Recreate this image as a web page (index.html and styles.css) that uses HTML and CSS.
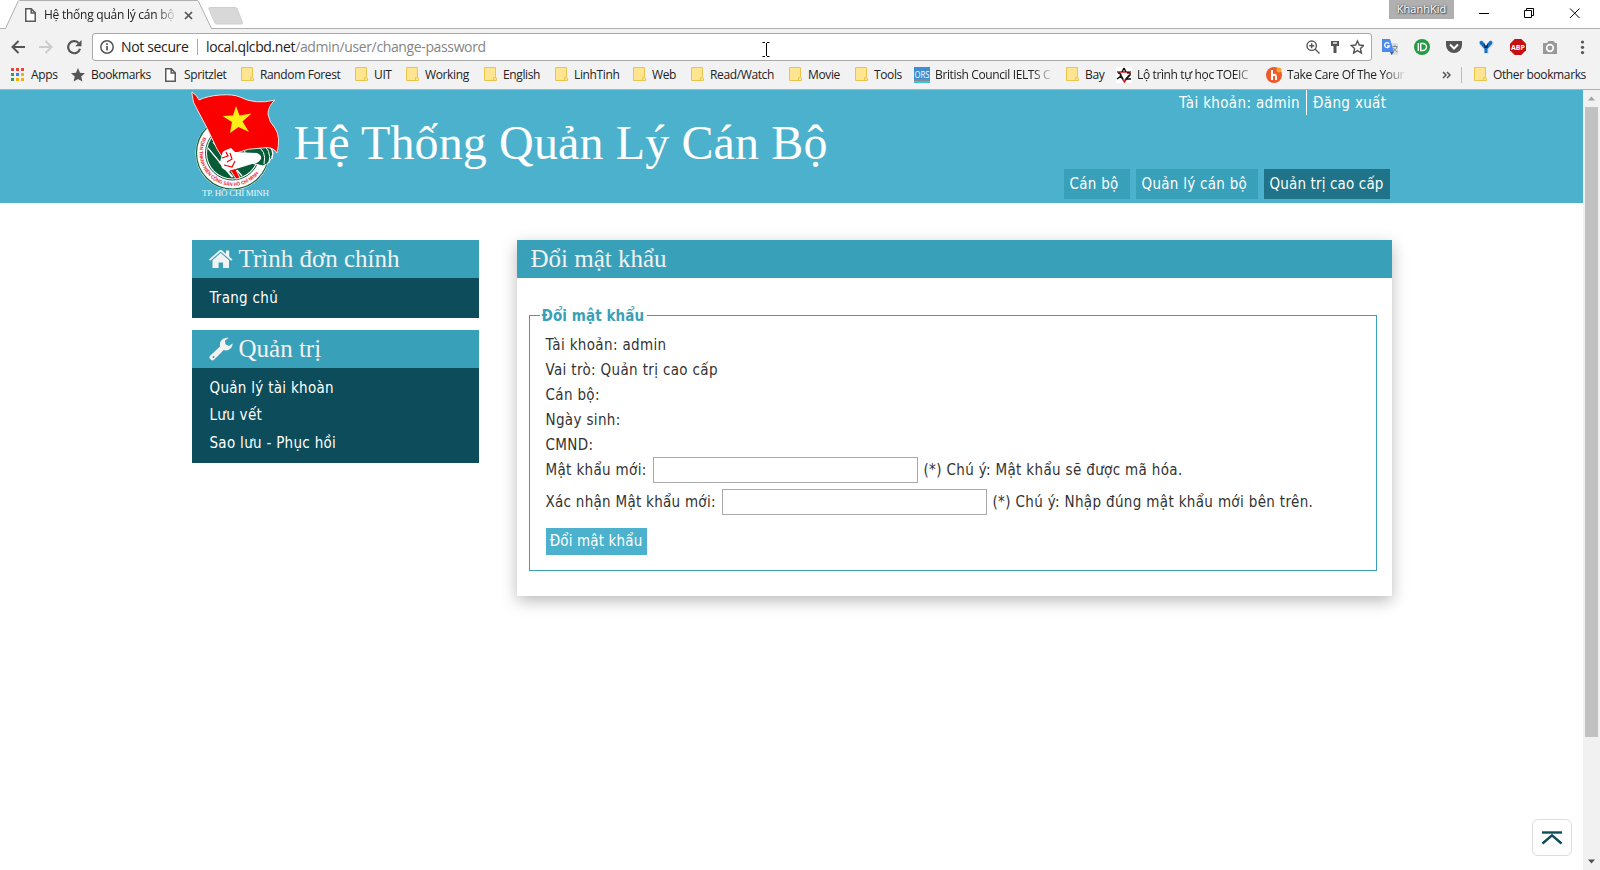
FILE: index.html
```html
<!DOCTYPE html>
<html lang="vi">
<head>
<meta charset="utf-8">
<title>Hệ thống quản lý cán bộ</title>
<link rel="stylesheet" href="styles.css">
</head>
<body>
<svg class="defs" width="0" height="0">
  <symbol id="page" viewBox="0 0 11 14"><path d="M.75.75h5.5l4 4v8.5H.75zM6.2.9v4h4" fill="#fff" stroke="#5a5a5a" stroke-width="1.5"/></symbol>
  <symbol id="folder" viewBox="0 0 13 15"><path d="M.5.5h11v9.8l1 .8v2.4h-12z" fill="#ffe58f" stroke="#e9c64b"/><path d="M9.500 14v-3.500h2" fill="none" stroke="#e9c64b"/></symbol>
</svg>
<div class="chrome">
  <div class="tabstrip">
    <svg class="tabshape" width="250" height="29" viewBox="0 0 250 29"><path d="M0 28.500H5L18 1.500q.5-1 1.500-1H197q1 0 1.500 1L211 28.500V29H0z" fill="#f2f2f2"/><path d="M0 28.500H5.500L18 1.500q.5-1 1.500-1H197q1 0 1.500 1L211.500 28.500H250" fill="none" stroke="#b0b0b0"/><path d="M209.500 7.500h26q1 0 1.500 1l5.500 14q.3 1.500-1 1.500h-25q-1 0-1.500-1l-6-14q-.5-1.500.5-1.500z" fill="#d8d8d8" stroke="#cfcfcf"/></svg>
    <div class="tab"><svg width="11" height="14"><use href="#page"/></svg><span class="tabtitle">Hệ thống quản lý cán bộ</span><svg width="9" height="9" viewBox="0 0 9 9"><path d="M1 1l7 7M8 1L1 8" stroke="#555" stroke-width="1.700"/></svg></div>
    <div class="profile">KhanhKid</div>
    <svg class="winbtns" width="98" height="12" viewBox="0 0 98 12" fill="none" stroke="#000"><path d="M0 6.500h10M45.500 3.500h7v7h-7zM47.500 3V1.500h7v7H53M91 1.500l9.500 9.500M100.500 1.500L91 11"/></svg>
  </div>
  <div class="toolbar">
    <svg class="nav" width="72" height="16" viewBox="0 0 72 16" fill="none" stroke-width="2"><path d="M15 8H2.500M8.500 2L2.500 8l6 6" stroke="#555"/><path d="M29 8h12.500M35.500 2l6 6-6 6" stroke="#ccc"/><path d="M68.500 4A6 6 0 1 0 70 9.800" stroke="#555" stroke-width="2.200"/><path d="M71.500 1v6.300h-6.300z" fill="#555"/></svg>
    <div class="omnibox">
      <svg width="14" height="14" viewBox="0 0 14 14"><circle cx="7" cy="7" r="6.200" fill="none" stroke="#555" stroke-width="1.500"/><path d="M7 6v4.500M7 3.300v1.700" stroke="#555" stroke-width="1.700"/></svg>
      <span class="secure">Not secure</span><i class="bar"></i><span class="url">local.qlcbd.net<em>/admin/user/change-password</em></span>
      <svg class="omniicons" width="58" height="16" viewBox="0 0 58 16" fill="none" stroke="#555" stroke-width="1.400"><circle cx="5.700" cy="6.700" r="4.700"/><path d="M9 10l4.500 4.500M3.300 6.700h5M5.700 4.300v5"/><path d="M25 2h8v5h-2.500v7h-3V7H25z" fill="#555" stroke="none"/><path d="M27 4h4" stroke="#fff"/><path d="M51.500 2l1.800 4 4.500.5-3.400 3 1 4.500-3.900-2.400-3.900 2.400 1-4.500-3.400-3 4.500-.5z"/></svg>
    </div>
    <svg class="exts" width="206" height="18" viewBox="0 0 206 18">
      <path d="M7 5h9v12H10z" fill="#ddd"/><path d="M10.500 8.500h5M13 7v1.500M15 9c-.5 2-2 3-3.500 4M11.500 10c1 2 2 3 4 4" stroke="#7d8c94" fill="none"/><path d="M0 1h8l4 13H0z" fill="#4a89ee"/><path d="M8 14h4l-2.500 3z" fill="#3059b8"/><path d="M7.200 5.700A2.500 2.500 0 1 0 7.500 8H5" fill="none" stroke="#fff" stroke-width="1.300"/>
      <circle cx="40" cy="9" r="8" fill="#259b43"/><path d="M36.300 5v8M38.700 5.500v7h2.300a3.500 3.500 0 0 0 0-7z" stroke="#fff" stroke-width="1.400" fill="none"/>
      <path d="M64 3h16v4a8 8 0 0 1-16 0z" fill="#555"/><path d="M68 6.500l4 4 4-4" fill="none" stroke="#fff" stroke-width="2"/>
      <path d="M97 3l3-1 4 4 4-4 3 1 1 3-5 6v4h-5v-4l-5-6z" fill="#d5e5f5"/><path d="M98 3.500q2-1.500 3 .5l3 4 3-4q1-2 3-.5 1 1 0 2.500L105.500 11v4h-3v-4L98 6q-1-1.500 0-2.500z" fill="#176fc1"/><path d="M101.500 4l2.500 4.500 2.500-4.500-1 6h-3z" fill="#0a2d5e"/>
      <path d="M132.700 1h6.600l4.700 4.700v6.600l-4.700 4.700h-6.600l-4.700-4.700V5.700z" fill="#c70d0d"/><text x="129" y="12" textLength="14" lengthAdjust="spacingAndGlyphs" class="abp">ABP</text>
      <path d="M161 5h4l1.500-2h5L173 5h2v11h-14z" fill="#999"/><circle cx="168" cy="10" r="3.300" fill="#999" stroke="#fff" stroke-width="1.700"/>
      <g fill="#555"><circle cx="200.500" cy="4" r="1.600"/><circle cx="200.500" cy="9.300" r="1.600"/><circle cx="200.500" cy="14.600" r="1.600"/></g>
    </svg>
  </div>
  <div class="bookmarks">
    <span class="bm w-apps"><svg width="13" height="13"><path d="M0 0h3v3H0zM5 0h3v3H5zM10 0h3v3h-3z" fill="#e8433a"/><path d="M0 5h3v3H0zM0 10h3v3H0z" fill="#2fa055"/><path d="M5 5h3v3H5z" fill="#3b84ee"/><path d="M10 5h3v3h-3zM5 10h3v3H5zM10 10h3v3h-3z" fill="#f6b000"/></svg>Apps</span>
    <span class="bm w-star"><svg width="14" height="14" viewBox="0 0 14 14"><path d="M7 0l2 4.800 5 .4-3.800 3.400 1.200 5L7 11l-4.400 2.600 1.200-5L0 5.200l5-.4z" fill="#555"/></svg>Bookmarks</span>
    <span class="bm w-spr"><svg width="11" height="14"><use href="#page"/></svg>Spritzlet</span>
    <span class="bm w-rf"><svg width="13" height="15"><use href="#folder"/></svg>Random Forest</span>
    <span class="bm w-uit"><svg width="13" height="15"><use href="#folder"/></svg>UIT</span>
    <span class="bm w-work"><svg width="13" height="15"><use href="#folder"/></svg>Working</span>
    <span class="bm w-eng"><svg width="13" height="15"><use href="#folder"/></svg>English</span>
    <span class="bm w-linh"><svg width="13" height="15"><use href="#folder"/></svg>LinhTinh</span>
    <span class="bm w-web"><svg width="13" height="15"><use href="#folder"/></svg>Web</span>
    <span class="bm w-read"><svg width="13" height="15"><use href="#folder"/></svg>Read/Watch</span>
    <span class="bm w-mov"><svg width="13" height="15"><use href="#folder"/></svg>Movie</span>
    <span class="bm w-tool"><svg width="13" height="15"><use href="#folder"/></svg>Tools</span>
    <span class="bm w-brit"><svg class="orsicon" width="16" height="16"><path d="M0 0h16v16H0z" fill="#3d8fd1"/><path d="M0 12h16v2H0z" fill="#888"/><path d="M0 14h16v2H0z" fill="#2ec5e8"/><text x=".5" y="11" class="ors" textLength="15" lengthAdjust="spacingAndGlyphs">ORS</text></svg><span class="fade">British Council IELTS C</span></span>
    <span class="bm w-bay"><svg width="13" height="15"><use href="#folder"/></svg>Bay</span>
    <span class="bm w-toeic"><svg width="16" height="16" fill="none" stroke-width="1.500"><path d="M0 0h16v16H0z" fill="#fff"/><path d="M1 5h14M4 8l4.500 7L13 8" stroke="#d11a22"/><path d="M8 1L6 5M8 1l2 4M2 6q3 0 3 3l-4 3M5 9l2 3M11 6q4-1 3 2l-4 4h5" stroke="#111"/></svg><span class="fade">Lộ trình tự học TOEIC</span></span>
    <span class="bm w-take"><svg width="16" height="16"><circle cx="8" cy="8" r="8" fill="#ee5a2b"/><path d="M6 3v10M6 9q4-3 4 1v3" fill="none" stroke="#fff" stroke-width="2"/><circle cx="13" cy="3" r="2.500" fill="#f6a531"/></svg><span class="fade">Take Care Of The Your</span></span>
    <svg class="more" width="9" height="8" viewBox="0 0 9 8"><path d="M1 1l3 3-3 3M5 1l3 3-3 3" fill="none" stroke="#555" stroke-width="1.500"/></svg>
    <i class="bmsep"></i>
    <span class="bm w-other"><svg width="13" height="15"><use href="#folder"/></svg>Other bookmarks</span>
  </div>
  <svg class="ibeam" width="8" height="17" viewBox="0 0 8 17"><path d="M.5 1.500h2.500M5 1.500h2.500M4.500 2v13M.5 15.500H3M5 15.500h2.500" stroke="#000"/></svg>
</div>
<div class="viewport">
  <div class="site">
    <header class="header">
      <div class="inner">
        <svg class="logo" width="88" height="108" viewBox="0 0 88 108">
          <defs><path id="arc" d="M11.200 45A33.400 33.400 0 1 0 72.500 71"/></defs>
          <circle cx="40.500" cy="61" r="37" fill="#fff"/><circle cx="40.500" cy="61" r="36" fill="none" stroke="#12633b" stroke-width="1.200"/><circle cx="40.500" cy="61" r="27" fill="#fff" stroke="#12633b"/>
          <circle cx="40.500" cy="61" r="25.500" fill="#075c38"/><path d="M16 56l24 29M21 50l29 34M27 70l14 15" stroke="#fff" stroke-width="1.200"/>
          <text class="ringtext"><textPath href="#arc" textLength="98" lengthAdjust="spacingAndGlyphs">ĐOÀN THANH NIÊN CỘNG SẢN HỒ CHÍ MINH</textPath></text>
          <path d="M52 56l19-5q8 0 10 10-2 10-10 13l-16-4z" fill="#075c38" stroke="#fff"/><path d="M64 54q11 4 8 18M69 52q11 5 8 19M74 51q9 7 6 16" stroke="#fff" fill="none"/>
          <path d="M0 0q5 3 7 8 8-4 21-5t20 2q15 8 35 3-7 6-7 14 1 8 7 14 6 9 2 25-4-7-15-5-14 0-26 5L35 59l13 27-4 1L25 57Q15 35 6 19 0 10 0 2z" fill="#fb0000" stroke="#e9e3e3" stroke-width="1"/>
          <path d="M30 63q0-4 4-5l5-2 4 4 22 1q5 2 4 6-3 5-9 5l-16 5-8 3-6-4-2-6z" fill="#fff"/><path d="M30 66l6-2-2-4M35 70l5-3-2-6M32 73l8 2 3-6M38 79l8-2" stroke="#e00" stroke-width="1.200" fill="none"/>
          <path d="M44 14l3.500 9.500 12-2-9 8L57 40l-10.500-5-8.500 6 2-11-9.500-6 10.500-.5z" fill="#ffed17"/>
          <text x="10" y="104" class="city" textLength="67">TP. HỒ CHÍ MINH</text>
        </svg>
        <h1 class="sitename">Hệ Thống Quản Lý Cán Bộ</h1>
        <div class="right">
          <div class="account"><span class="user">Tài khoản: admin</span><span class="logout">Đăng xuất</span></div>
          <nav class="menu"><a class="m1">Cán bộ</a><a class="m2">Quản lý cán bộ</a><a class="m3">Quản trị cao cấp</a></nav>
        </div>
      </div>
    </header>
    <div class="content">
      <aside class="side">
        <section class="box"><h2><svg width="24" height="20" viewBox="0 0 24 20" fill="#f2f2f2"><path d="M0 10.500L10.500 1.300q1.200-1 2.400 0L17 4.900V1.500h3.200v6.100l3.300 2.900-1.200 1.300L11.700 2.700 1.200 11.800z"/><path d="M11.700 4l8.300 7.200V19h-6v-5.500H9.600V19H3.500v-7.800z"/></svg><span>Trình đơn chính</span></h2><ul><li>Trang chủ</li></ul></section>
        <section class="box"><h2><svg width="24" height="24" viewBox="0 0 24 24"><path fill-rule="evenodd" d="M1.100 18.800L11 9.500C10 4 14 .5 19.500.9L16 3.500l.4 3.700 3.500 1.900 3.700-2.600c0 5-4.600 7.800-8.800 6.600L5 22.800q-1.500 1.200-3 0l-1-1q-1.200-1.500.1-3zM4.500 19a1 1 0 1 0 .1 2 1 1 0 0 0-.1-2z" fill="#f2f2f2"/></svg><span class="t2">Quản trị</span></h2><ul><li>Quản lý tài khoàn</li><li>Lưu vết</li><li>Sao lưu - Phục hồi</li></ul></section>
      </aside>
      <main class="card">
        <h2 class="cardtitle">Đổi mật khẩu</h2>
        <fieldset class="form">
          <legend>Đổi mật khẩu</legend>
          <p>Tài khoản: admin</p><p>Vai trò: Quản trị cao cấp</p><p>Cán bộ:</p><p>Ngày sinh:</p><p>CMND:</p>
          <div class="row"><label class="l1">Mật khẩu mới:</label><input type="password"><span>(*) Chú ý: Mật khẩu sẽ được mã hóa.</span></div>
          <div class="row"><label class="l2">Xác nhận Mật khẩu mới:</label><input type="password"><span>(*) Chú ý: Nhập đúng mật khẩu mới bên trên.</span></div>
          <button type="button">Đổi mật khẩu</button>
        </fieldset>
      </main>
    </div>
    <div class="totop"><svg width="20" height="14" viewBox="0 0 20 14" fill="none" stroke="#0d4c5b"><path d="M0 1.500h20" stroke-width="2.400"/><path d="M.5 12.500L10 4.300l9.500 8.200" stroke-width="2.400"/></svg></div>
  </div>
  <div class="scroll"><svg width="17" height="17"><path d="M5 10.500h7L8.500 6.500z" fill="#a3a3a3"/></svg><div class="thumb"></div><svg width="17" height="17"><path d="M5 6.500h7L8.500 10.500z" fill="#505050"/></svg></div>
</div>
</body>
</html>
```
FILE: styles.css
```css
* { box-sizing: border-box; }
body { margin: 0; width: 1600px; height: 870px; overflow: hidden; display: flex; flex-direction: column; background: #fff; font-family: "DejaVu Sans Condensed", "DejaVu Sans", sans-serif; font-stretch: condensed; font-size: 15px; color: #333; }
svg { display: block; flex: none; }
.defs { position: absolute; }
h1, h2, p, ul { margin: 0; padding: 0; font-weight: normal; }

/* browser frame */
.chrome { position: relative; height: 90px; flex: none; background: #f2f2f2; border-bottom: 1px solid #b0b0b0; font-family: "Open Sans", "Noto Sans", sans-serif; font-stretch: normal; font-size: 12px; color: #222; white-space: nowrap; }
.tabstrip { position: relative; height: 29px; background: #fff; border-bottom: 1px solid #b0b0b0; display: flex; align-items: flex-start; }
.tabshape { position: absolute; left: 0; top: 0; }
.tab { position: relative; display: flex; align-items: center; height: 30px; padding-left: 25px; }
.tabtitle { width: 132px; margin: 0 8px 0 8px; overflow: hidden; letter-spacing: -.250px; padding-bottom: 1px; -webkit-mask-image: linear-gradient(90deg, #000 112px, transparent 134px); }
.profile { margin-left: auto; width: 65px; height: 19px; background: #b0b0b0; color: #fff; font-size: 11px; line-height: 17px; text-align: center; text-shadow: 0 0 2px #333, 1px 1px 1px #555; }
.winbtns { margin: 7px 23px 0 25px; overflow: visible; }
.toolbar { height: 35px; display: flex; align-items: center; padding: 1px 0 0 10px; }
.omnibox { margin-left: 10px; width: 1280px; height: 28px; background: #fff; border: 1px solid #a9a9a9; border-radius: 3px; display: flex; align-items: center; padding: 0 7px; font-size: 14px; line-height: 18px; }
.secure { margin-left: 7px; width: 67px; letter-spacing: -.350px; padding-bottom: 1px; }
.bar { width: 1px; height: 16px; background: #aaa; margin: 0 8px 0 9px; }
.url { letter-spacing: -.370px; padding-bottom: 1px; }
.url em { font-style: normal; color: #858585; }
.omniicons { margin-left: auto; }
.exts { margin-left: 10px; }
.abp { font: bold 7.500px "Open Sans", sans-serif; fill: #fff; }
.orsicon { overflow: visible; letter-spacing: 0; }
.ors { font: 9.500px "Open Sans", sans-serif; fill: #fff; }
.bookmarks { height: 21px; display: flex; align-items: center; padding-left: 11px; letter-spacing: -.370px; }
.bm { display: flex; align-items: center; gap: 6px; flex: none; height: 18px; line-height: 18px; }
.w-apps { width: 60px; gap: 7px; } .w-star { width: 94px; } .w-spr { width: 76px; gap: 8px; } .w-rf { width: 114px; }
.w-uit { width: 51px; } .w-work { width: 78px; } .w-eng { width: 71px; } .w-linh { width: 78px; }
.w-web { width: 58px; } .w-read { width: 98px; } .w-mov { width: 66px; } .w-tool { width: 59px; } .w-brit { width: 152px; gap: 5px; }
.w-bay { width: 50px; } .w-toeic { width: 150px; gap: 5px; } .w-take { width: 176px; gap: 5px; }
.fade { width: 120px; -webkit-mask-image: linear-gradient(90deg, #000 97px, transparent 120px); }
.more { margin-right: 10px; }
.bmsep { width: 1px; height: 16px; background: #bbb; margin-right: 12px; }
.ibeam { position: absolute; left: 762px; top: 41px; }

/* page */
.viewport { display: flex; height: 780px; }
.site { position: relative; width: 1583px; }
.header { height: 113px; background: #4cb1cc; color: #fff; }
.inner { width: 1200px; margin: 0 auto; display: flex; height: 113px; }
.logo { margin-top: 2px; overflow: visible; }
.city { font: 9px "Liberation Serif", serif; fill: #e6f7fb; }
.ringtext { font: bold 5px "Liberation Sans", sans-serif; fill: #e8262c; }
.sitename { margin: 25px 0 0 14px; font: 48px/55px "Liberation Serif", serif; letter-spacing: .130px; white-space: nowrap; }
.right { margin-left: auto; display: flex; flex-direction: column; align-items: flex-end; justify-content: space-between; padding: 0 2px 4px 0; white-space: nowrap; }
.account { display: flex; line-height: 27px; height: 25px; }
.user { border-right: 1px solid #fff; padding-right: 6px; width: 128px; height: 25px; }
.logout { padding-left: 6px; width: 82.500px; }
.user, .logout, .form { letter-spacing: .350px; }
.menu { display: flex; gap: 6px; line-height: 31px; letter-spacing: .280px; }
.menu a { height: 30px; background: #39a0ba; padding-left: 6px; }
.m1 { width: 66px; } .m2 { width: 122px; } .menu .m3 { width: 126px; background: #1f7489; letter-spacing: .150px; }
.content { width: 1200px; margin: 37px auto 0; display: flex; justify-content: space-between; align-items: flex-start; }
.side { width: 287px; display: flex; flex-direction: column; gap: 12px; }
.box { background: #0d4c5b; color: #fff; }
.box h2, .cardtitle { height: 38px; background: #39a0ba; color: #f2f2f2; font: 25px/37px "Liberation Serif", serif; letter-spacing: 0; }
.box h2 { display: flex; align-items: center; gap: 6px; padding-left: 17px; line-height: 35px; }
.box h2 span { padding-bottom: 2px; }
.box ul { list-style: none; padding: 7px 18px 6px; }
.box li { line-height: 27px; height: 27px; letter-spacing: .300px; }
.box + .box li { height: 27.330px; }
.card { width: 875px; height: 356px; background: #fff; box-shadow: 0 5px 15px rgba(0,0,0,.27); }
.cardtitle { padding-left: 14px; line-height: 37px; }
.form { margin: 28px 15px 0 12px; height: 265px; border: 1px solid #39a0ba; padding: 7px 16px 0; min-width: 0; white-space: nowrap; }
.form legend { margin-left: -6px; padding: 0 3px 0 2px; line-height: 20px; height: 19px; color: #39a0ba; font-weight: bold; letter-spacing: .100px; }
.form p { line-height: 26px; height: 25px; }
.row { display: flex; align-items: center; height: 26px; margin-bottom: 6px; }
.row label { flex: none; }
.l1 { width: 107px; } .l2 { width: 176px; letter-spacing: .280px; }
.row input { width: 265px; height: 26px; border: 1px solid #a9a9a9; margin: 0 6px 0 0; padding: 0; }
.form button { display: block; margin-top: 13px; width: 101px; height: 27px; padding: 0 0 1px; border: 0; background: #4cb1cc; color: #fff; font: inherit; letter-spacing: .150px; }
.totop { position: absolute; right: 11px; bottom: 14px; width: 40px; height: 37px; border: 1px solid #ddd; border-radius: 6px; display: flex; align-items: center; justify-content: center; background: #fff; }
.scroll { width: 17px; background: #f1f1f1; display: flex; flex-direction: column; align-items: center; }
.thumb { width: 13px; height: 630px; background: #c1c1c1; margin-bottom: auto; }
```
